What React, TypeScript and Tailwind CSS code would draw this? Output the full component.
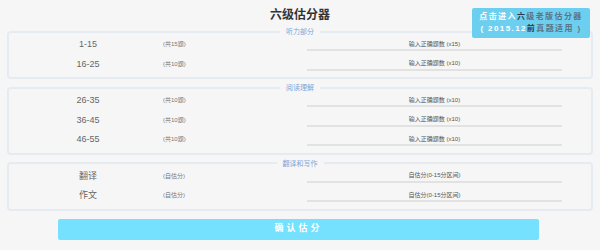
const font = { fontFamily: '"Liberation Sans", "Noto Sans CJK SC", sans-serif' };

type Row = { label: string; note: string; hint: string };

const sections: { title: string; rows: Row[] }[] = [
  {
    title: "听力部分",
    rows: [
      { label: "1-15", note: "(共15题)", hint: "输入正确题数 (x15)" },
      { label: "16-25", note: "(共10题)", hint: "输入正确题数 (x10)" },
    ],
  },
  {
    title: "阅读理解",
    rows: [
      { label: "26-35", note: "(共10题)", hint: "输入正确题数 (x10)" },
      { label: "36-45", note: "(共10题)", hint: "输入正确题数 (x10)" },
      { label: "46-55", note: "(共10题)", hint: "输入正确题数 (x10)" },
    ],
  },
  {
    title: "翻译和写作",
    rows: [
      { label: "翻译", note: "(自估分)", hint: "自估分(0-15分区间)" },
      { label: "作文", note: "(自估分)", hint: "自估分(0-15分区间)" },
    ],
  },
];

function Section({ title, rows }: { title: string; rows: Row[] }) {
  return (
    <fieldset className="mx-[7px] border-2 border-[#e6ebf1] rounded-[4px] pb-[3px]">
      <legend className="mx-auto px-[6px] text-[7px] leading-[7px] text-[#7ea6d6]">{title}</legend>
      {rows.map((r) => (
        <div key={r.label} className="flex items-center h-[19.5px]">
          <div className="ml-[4px] w-[150px] text-center text-[9px] text-[#666]">{r.label}</div>
          <div className="w-[144px] text-[6px] text-[#777]">{r.note}</div>
          <input
            className="w-[255px] h-[13px] border-b-2 border-[#e2e2e2] bg-transparent text-center text-[6px] outline-none placeholder:text-[#555]"
            placeholder={r.hint}
          />
        </div>
      ))}
    </fieldset>
  );
}

export default function App() {
  return (
    <div className="relative w-[600px] h-[250px] bg-[#f6f6f6] overflow-hidden" style={font}>
      <h1 className="pt-[8px] h-[28px] text-center text-[12px] leading-[14px] font-bold text-[#333]">六级估分器</h1>

      <div className="flex flex-col gap-[5px]">
        {sections.map((s) => (
          <Section key={s.title} title={s.title} rows={s.rows} />
        ))}
      </div>

      <div className="flex justify-center mt-[8px] pr-[3px]">
        <button className="w-[481px] h-[21px] rounded-[2px] bg-[#76e1fe] text-white text-[9px] font-bold tracking-[3px]">
          确认估分
        </button>
      </div>

      <a className="absolute left-[472px] top-[8px] w-[118px] h-[30px] rounded-[2px] bg-[#6dcff0] flex flex-col items-center justify-center whitespace-nowrap text-[8px] leading-[12px] font-bold tracking-[1.4px] text-white">
        <span>
          点击进入<span className="text-[#2f3d48]">六</span>
          <span className="text-[#5a7585]">级老版估分器</span>
        </span>
        <span>
          ( 2015.12<span className="text-[#2f3d48]">前</span>
          <span className="text-[#5a7585]">真题适用 )</span>
        </span>
      </a>
    </div>
  );
}
